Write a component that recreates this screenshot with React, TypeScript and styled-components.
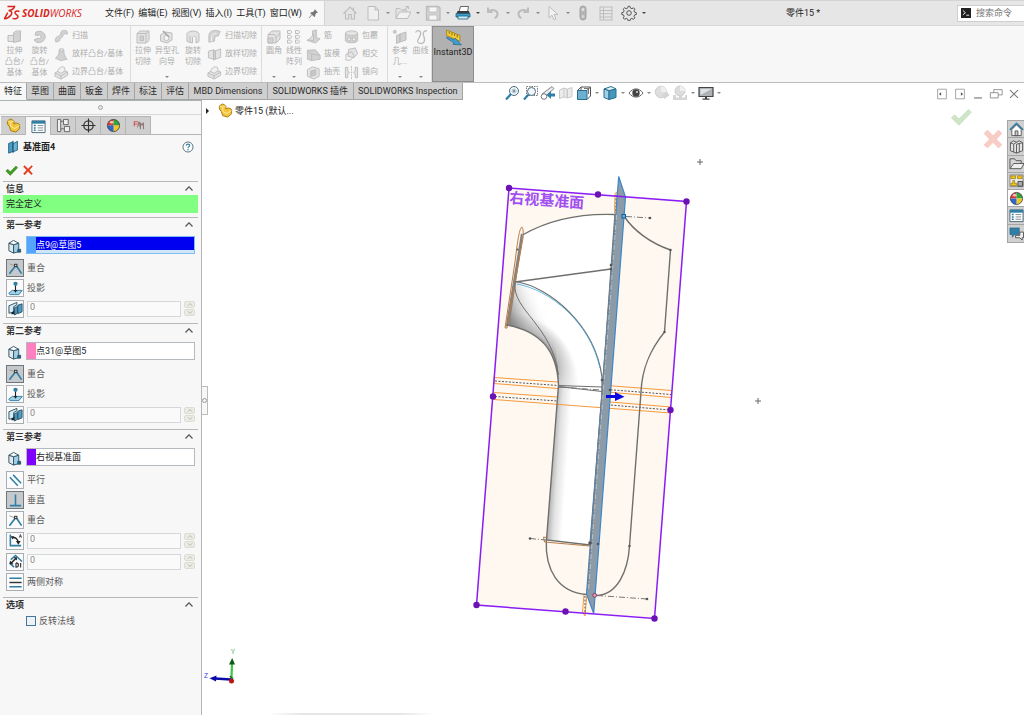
import React from "react";
import styled, { createGlobalStyle } from "styled-components";

const GlobalStyle = createGlobalStyle`
  *, *::before, *::after { box-sizing: border-box; }
  html, body { margin: 0; padding: 0; background: #fff; }
  body, button, input {
    font-family: Roboto, "Noto Sans CJK SC", sans-serif;
    font-size: 9px;
    line-height: 12px;
    color: #222;
  }
  button { padding: 0; margin: 0; border: 0; background: none; cursor: pointer; }
`;

/* ---------- icons ---------- */

const G = "#bdbdbd";
const F = "#e3e3e3";
const D = "#d2d2d2";
const B = "#2f7fa6";
const LB = "#9fd0e6";

const ICONS: Record<string, React.ReactNode> = {
  home: <g fill="none" stroke={G} strokeWidth="1.1"><path d="M1.500 8.500 8 2l6.500 6.500M3.500 7.500V14h3.200V9.500h2.600V14h3.200V7.500M11.500 2.500v2.500" fill={F} /></g>,
  newDoc: <path d="M3 1.500h7l3.500 3.500v10H3zM10 1.500V5h3.500" fill="#efefef" stroke={G} />,
  open: <g stroke={G} fill={F}><path d="M1 13.500V3.500h4l1.500 1.500h5v2" /><path d="M1 13.500 4.500 7H16l-3.500 6.500z" fill="#f1f1f1" /><path d="M8 5.500 13 2M10.500 1.500H13.500V4" fill="none" /></g>,
  save: <g><path d="M1.500 1.500h12l1.500 1.500v12H1.500z" fill={D} stroke={G} strokeWidth="1.400" /><path d="M4 2h8v5H4zM4 10h8v5H4z" fill="#f6f6f6" stroke={G} strokeWidth=".8" /></g>,
  print: <g><path d="M4 7 5.500 1.500h8L12.500 7z" fill="#fff" stroke="#666" /><path d="M2.500 6h11.500l1 3H1.500z" fill="#3a3a3a" /><path d="M1 8.500h14V12H1z" fill="#3e9cc6" stroke="#1f5f80" strokeWidth=".8" /><path d="M3 11h10v3H3z" fill="#c9ebf8" stroke="#1f5f80" strokeWidth=".8" /></g>,
  undo: <g fill="none" stroke={G} strokeWidth="2"><path d="M3 6.500C7 4 12.500 5 12.500 9c0 2-1 3.500-3 4" /><path d="M3 2.500v4.500h4.500" /></g>,
  redo: <g fill="none" stroke={G} strokeWidth="2"><path d="M13 6.500C9 4 3.500 5 3.500 9c0 2 1 3.500 3 4" /><path d="M13 2.500v4.500H8.500" /></g>,
  cursor: <path d="M4 1.500v11.500l3-2.800 2 4.600 2-1-2-4.300h4z" fill="#f2f2f2" stroke={G} />,
  traffic: <g><rect x="5" y="1" width="6" height="14" rx="3" fill="#b4b4b4" stroke="#a2a2a2" /><circle cx="8" cy="4.500" r="1.500" fill="#e2e2e2" /><circle cx="8" cy="11.500" r="1.500" fill="#d4d4d4" /></g>,
  list: <g fill="none" stroke={G}><rect x="2" y="2" width="12" height="13" /><path d="M2 5.500h12M2 8.700h12M2 12h12M5.500 2v13" /></g>,
  gear: <g fill="none" stroke="#555"><circle cx="8" cy="8" r="2.300" /><path d="M8 1.200l1 .2.500 1.700 1.400.6 1.600-.9 1.400 1.400-.9 1.600.6 1.400 1.700.5v1.800l-1.700.4-.6 1.400.9 1.600-1.400 1.400-1.600-.9-1.400.6-.5 1.700H7.100l-.5-1.700-1.400-.6-1.600.9-1.400-1.400.9-1.600-.6-1.400-1.700-.4V7.700l1.700-.5.6-1.400-.9-1.600 1.400-1.400 1.600.9 1.400-.6.5-1.700z" /></g>,
  pin: <g fill="#777"><path d="M9.500 1.500l5 5-1.600.4-2.300 2.600-.3 2.800-1.200.8L3.500 7.500l.8-1.200 2.900-.4 2.300-2.600z" /><path d="M5.800 9.300 1.500 14.500" stroke="#777" strokeWidth="1.200" /></g>,
  extrude: <g stroke={G} fill={F}><path d="M1 6.500h5.500v6H1z" /><path d="M6.500 4 13.500 3v9l-7 1.500z" fill={D} /><path d="M6.500 4 9 2h5l-.5 1" /></g>,
  revolve: <path d="M4 3c8-3 12 5 7 9-3 2.500-7 2-9-1l4-2c2 1.500 4-1 2.500-2.500S5 7.500 3 6z" fill={D} stroke={G} />,
  sweep: <path d="M2 14c-2-5 2-6 4-7s0-5 4-5.500 5 2 4 4l-3-.5c-1-.500-1 .5-1.300 2C9 10 5.500 9.500 6 12.500z" fill={D} stroke={G} />,
  loft: <g stroke={G} fill={D}><path d="M5.500 3.500c.2 4-1 6-4 8.500l5.500 2.500 7-1.500C11 10 10.500 7 10.500 3.500z" /><ellipse cx="8" cy="3.200" rx="2.600" ry="1.400" fill={F} /></g>,
  boundary: <g stroke={G} fill={F}><path d="M1 8.500 8 4.500l6.500 3v3.500L7.500 15 1 12z" /><path d="M1 8.500l6.500 3 7-4M7.500 11.500V15" fill="none" /><path d="M4 7C4 3 9 1 11 2.500L12 6 7.500 9z" fill="#f0f0f0" /></g>,
  cutBox: <g stroke={G} fill={F}><path d="M2 4.500 5 2h9v9.500L11 14H2z" /><path d="M2 4.500h9V14M11 4.500 14 2" fill="none" /><path d="M5 7h3.500v4.500H5z" fill={D} /></g>,
  hole: <g stroke={G} fill={F}><path d="M1.500 6 6 3l7 1v7l-5 3-6.500-2z" /><circle cx="7.500" cy="9" r="2.600" fill="#f7f7f7" /><path d="M4 2l6 6" strokeWidth="1.600" stroke="#a9a9a9" /></g>,
  revCut: <path d="M2 4.500C4 1.500 11 1 14 4.500v8l-3 1.500V8.500c-1-1.500-2.500-1.500-3.500 0V14L2 12.500zM5 7v6" fill={F} stroke={G} />,
  sweepCut: <g stroke={G} fill={D}><path d="M2 14V7c0-3.500 3-5.500 7-5.500l5 1-2 5C9 7.500 8 8.500 8 13z" /><path d="M5 13.500V8c.5-2 2-3.500 5-3.500" fill="none" stroke="#f4f4f4" /></g>,
  loftCut: <g stroke={G} fill={F}><path d="M1.500 4.500 7 3v10l-5.500-1.500zM9 4l5.500-2v9L9 13z" /><path d="M7 3l2 1v9l-2 1z" fill={D} /></g>,
  fillet: <g stroke={G} fill={F}><path d="M2 5.500 6 2h8v8l-4 4H2z" /><path d="M2 5.500h5c2 0 3 1 3 3V14M10 8.500 14 4" fill="none" /><path d="M2 9h5v5H2z" fill={D} /></g>,
  pattern: <g stroke={G} fill="#f4f4f4">{[1, 5.800, 10.600].map((y) => <g key={y}><path d={`M1.500 ${y + .5}h3l1.500 1.500-1.500 1.500h-3zM9.500 ${y + .5}h3l1.500 1.500-1.500 1.500h-3z`} /></g>)}</g>,
  rib: <g stroke={G} fill={D}><path d="M7 2l4-1v8l4 1.500-5 4.500-9-3 6-2z" /><path d="M3 11.500 8 6v6.500z" fill={F} /></g>,
  draft: <g stroke={G} fill={D}><path d="M1.500 3.500 10 3l5 6v4L6 14.500 1.500 13z" /><path d="M1.500 3.500 6 7.500V14.500M6 7.500l9 1.500" fill="none" /></g>,
  shell: <g stroke={G} fill={F}><path d="M1.500 5 7 2l7 2v8l-5.500 3L1.500 12z" /><path d="M5 6.500 10.500 5v5.500L5 12z" fill="#c6c6c6" /></g>,
  wrap: <g stroke={G} fill={D}><path d="M1.500 4.500v8c1 3 12 3 13 0v-8" /><ellipse cx="8" cy="4.500" rx="6.500" ry="2.500" fill={F} /><path d="M4 9.500h3v3H4zM9 9.500h3v3H9z" fill="#f4f4f4" /></g>,
  intersect: <g stroke={G} fill="none"><path d="M5 2.500 12 1l2.500 6-4 4.500L4 10z" fill={F} /><path d="M2 8l6-3 3 4.500L7 14H2z" /></g>,
  mirror: <g stroke={G} fill={F}><path d="M1.500 2.500H4v4l2 1.500-2 1.500v4H1.500zM14.500 2.500H12v4L10 8l2 1.500v4h2.500z" /><path d="M8 1v14" strokeDasharray="2 1" /></g>,
  refGeo: <g stroke={G} fill={D}><circle cx="2.800" cy="2.800" r="1.500" /><path d="M4.500 6.500 8 5v8l-3.500 1.500zM8 5l6-2v8L8 13z" /></g>,
  curve: <path d="M2.500 3.500c2-3 6-2 5 2s-5 7-1.500 8.500S13 13 11 8s0-6 3-6.500" fill="none" stroke={G} strokeWidth="1.300" />,
  instant: <g><path d="M1.500 1 14 6v5.500L1.500 6z" fill="#f5cf3a" stroke="#a78312" strokeWidth=".8" /><path d="M4 2.500v2M6.500 3.500v2.500M9 4.500v2M11.500 5.500v2.500" stroke="#6b540c" strokeWidth=".8" /><path d="M1.500 7.500l7 2.500 1-1.500L15.500 15l-8-.5 1-1.500-6.500-4z" fill="#3f9ccb" stroke="#1f668c" strokeWidth=".6" /></g>,
  zoomFit: <g fill="none"><circle cx="10" cy="6" r="4.500" fill="#eef8fd" stroke="#4f6a7a" /><path d="M7 9 2 14.500" stroke={B} strokeWidth="2.200" /><path d="M7.500 6h5M10 3.500v5M8.500 4.500l3 3M11.500 4.500l-3 3" stroke="#7b8d98" strokeWidth=".8" /></g>,
  zoomArea: <g fill="none"><path d="M4.500 1.500h11v9h-11z" stroke="#777" strokeDasharray="1.500 1" /><circle cx="9.500" cy="6.500" r="4" fill="#eef8fd" stroke="#4f6a7a" /><path d="M6.500 9.500 2 14.500" stroke={B} strokeWidth="2.200" /></g>,
  prevView: <g><path d="M2 9 12 1.500l2 2L5 12z" fill="#e9e9e9" stroke="#888" /><circle cx="4" cy="11.500" r="2.800" fill="#fff" stroke="#777" /><path d="M11 6v2.500h4v3h-4V14L6.500 10z" fill={B} /></g>,
  section: <g stroke="#c9c9c9" fill="#ececec"><path d="M1.500 5 6 3v9l-4.500 1.500zM6 3l3 1v9l-3-1M9.500 4 14 2.500v9L9.500 13z" /></g>,
  orient: <g><path d="M1.500 5.500h9.500v9H1.500z" fill="#6bb0d0" stroke="#276d90" /><path d="M1.500 5.500 5 2h9.500v9L11 14.500M11 5.500 14.500 2M5 2v3.500" fill="none" stroke="#555" /><path d="M8 3.500h4.500v5.500" stroke="#555" fill="none" strokeWidth=".8" /></g>,
  display: <g stroke="#276d90"><path d="M2 4l5 1.500v9L2 12.500z" fill={LB} /><path d="M7 5.500 14 4v8.500l-7 2z" fill="#4796bc" /><path d="M2 4l7-2.500L14 4 7 5.500z" fill="#e6f4fa" /></g>,
  eye: <g><path d="M1 8c4-5.500 10-5.500 14 0-4 5.500-10 5.500-14 0z" fill="#fff" stroke="#666" /><circle cx="8" cy="8" r="3.700" fill="#444" /><circle cx="9" cy="7" r="1" fill="#ddd" /></g>,
  ballPale: <g><circle cx="7" cy="7" r="5.800" fill="#dedede" stroke="#cfcfcf" /><path d="M7 7V1.200A5.800 5.800 0 0 1 12.800 7z" fill="#efefef" /><path d="M8 10l5-3 2.500 3-5 4z" fill="#d4d4d4" /></g>,
  scenePale: <g><path d="M1 10h3v2.500h3V10h3v2.500h3V10h2v5H1z" fill="#d6d6d6" /><circle cx="8" cy="6" r="5" fill="#dcdcdc" stroke="#cfcfcf" /><path d="M8 6V1a5 5 0 0 1 5 5z" fill="#efefef" /></g>,
  monitor: <g><path d="M1 2.500h14v9H1z" fill="#aeb2b5" stroke="#444" strokeWidth="1.200" /><path d="M2.500 4h11L2.500 10z" fill="#dfe2e4" /><path d="M7 11.500h2v2h2.500v1.200h-7v-1.200H7z" fill="#444" /></g>,
  paneL: <g fill="none" stroke="#9a9a9a"><path d="M3 2.500h10v11H3z" /><path d="M7 6 4.500 8 7 10z" fill="#555" stroke="none" /></g>,
  paneR: <g fill="none" stroke="#9a9a9a"><path d="M3 2.500h10v11H3z" /><path d="M9 6l2.500 2L9 10z" fill="#555" stroke="none" /></g>,
  min: <path d="M3.500 12.500h9" stroke="#888" strokeWidth="1.500" />,
  restore: <g fill="#fff" stroke="#888"><path d="M5.500 3h9.500v6h-9.500z" /><path d="M1.500 6.500h9v6h-9z" /></g>,
  close: <path d="M3.500 3.500l9 9M12.500 3.500l-9 9" stroke="#777" strokeWidth="1.200" />,
  part: <g stroke="#a47a10" fill="#f2c53c"><path d="M1.500 6.500V3L5 1l3.500 2v3.500c1-1.500 4.500-1.500 6 .5v4.500L10.500 15 5 13.500 3.500 9z" /><path d="M1.500 3 5 4.500v4.500l4.500 2.500M5 4.500l3.500-1.500M9.500 11 14.500 8" fill="none" stroke="#fff2b0" strokeWidth=".9" /></g>,
  property: <g><path d="M1 2h14v12.500H1z" fill="#fff" stroke="#4a6575" /><path d="M1 2h14v3H1z" fill={B} /><path d="M3 7h2M3 9.500h2M3 12h2" stroke={B} strokeWidth="1.600" /><path d="M7 7h6M7 9.500h6M7 12h6" stroke="#7f8b92" /></g>,
  config: <g fill="#efefef" stroke="#666"><path d="M1.500 1.500h3.500v13H1.500zM5 3.500h3M5 11.500h4" /><path d="M8 1.500h5v5.500H8zM9 9h5.500v5.500H9z" /></g>,
  target: <g fill="none" stroke="#333"><circle cx="8" cy="8" r="5" strokeWidth="1.300" /><path d="M8 .5v15M.5 8h15" strokeWidth="1.200" /></g>,
  ball: <g><path d="M8 8V1.500a6.500 6.500 0 0 0-6.500 6.500z" fill="#e13a2c" /><path d="M8 8V1.500a6.500 6.500 0 0 1 6.500 6.500z" fill="#2fa53c" /><path d="M8 8h6.500A6.500 6.500 0 0 1 8 14.500z" fill="#f4c62c" /><path d="M8 8v6.500A6.500 6.500 0 0 1 1.500 8z" fill="#2f69c8" /><circle cx="8" cy="8" r="6.500" fill="none" stroke="#333" strokeWidth=".8" /><ellipse cx="6" cy="4.500" rx="2" ry="1.300" fill="#fff" opacity=".7" /></g>,
  cam: <g fill="none" stroke="#d05050"><path d="M3 4h4.500M3 6.500h4M3.500 4v5" /><path d="M7 10l1.500-6L10 10M10 12V5l2 3 1-3 .5 7" stroke="#8b6a6a" /></g>,
  plane: <g stroke="#1f5f80"><path d="M3 4 8 2v11l-5 2z" fill="#4c9cc4" /><path d="M8 4.500 13 1.500v10L8 13.500z" fill="#6fb4d4" /><path d="M8 1v14" /></g>,
  help: <g><circle cx="8" cy="8" r="6.700" fill="#fff" stroke="#4c6575" strokeWidth="1.200" /><path d="M5.800 6.200c.2-3 4.600-2.600 4.400 0C10 7.500 8 7.600 8 9.600" fill="none" stroke={B} strokeWidth="1.600" /><circle cx="8" cy="11.800" r="1" fill={B} /></g>,
  check: <path d="M1 8.500 3.500 6.500 6.500 9.500 13.500 2.500 15.500 4.500 6.500 14z" fill="#3f9d22" stroke="#2c7814" strokeWidth=".6" />,
  cancel: <path d="M2 3.500 3.500 2 8 6.500 13 2l1 1.200L9.800 8l4.200 5-1.500 1.200L8 9.800 3.500 14.500 2 13l4.300-5z" fill="#e23b1c" stroke="#e23b1c" strokeWidth=".5" />,
  cross: <path d="M2 4 4 2l4 4.200L12 2l2 2-4 4.200 4 4L12 14 8 10l-4 4-2-1.800 4-4z" fill="#e23b1c" stroke="#e23b1c" strokeWidth="1.200" strokeLinejoin="round" />,
  face: <g stroke="#2d5165"><path d="M2 4.500 7 6v9l-5-2.500z" fill="#e4e8ea" /><path d="M7 6l5.500-1.500v9L7 15z" fill={LB} /><path d="M2 4.500 7 1.500l5.500 3L7 6z" fill="#fff" /><path d="M11.500 11h3v3h-3z" fill="#1f6b92" /></g>,
  coincident: <g fill="none"><path d="M1.500 13.500 8.500 4.500l6 9" stroke={B} strokeWidth="1.800" /><path d="M1.500 3 7 5" stroke="#999" /><rect x="7" y="3.500" width="2.500" height="2.500" fill="#ddd" stroke="#333" /></g>,
  project: <g><path d="M.8 13 4.500 10h10.700l-3.500 4.500H2z" fill={LB} stroke={B} /><path d="M8 4v7" stroke="#222" strokeWidth="1.200" /><path d="M6 9.500h4L8 12.500z" fill="#222" /><circle cx="8" cy="3" r="2.300" fill={B} /></g>,
  parallelPlane: <g stroke="#2d5165"><path d="M1 5 9.500 1.500V4L6 6v6l-5 1z" fill="#d6eaf3" /><path d="M4 12l4-2.500v4.500H3.500z" fill="#222" stroke="none" /><path d="M7 7l3-1v7l-3 2zM10.500 4.500 15 3v8.500l-4.500 2z" fill="#4c9cc4" /></g>,
  parallel: <path d="M2 4.500l8.500 9M5.500 2 14 11" stroke={B} strokeWidth="1.600" fill="none" />,
  perpendicular: <path d="M8 1.500v11.500M2 13.500h12" stroke={B} strokeWidth="1.700" fill="none" />,
  angle: <g fill="none"><path d="M2.500 1.500v12H14" stroke={B} strokeWidth="1.700" /><path d="M4 5c4-1 6.500 1.500 7 5.500" stroke="#222" strokeWidth="1.500" /><path d="M8.500 8.500h5l-2.500 4zM3 3.500 6.500 3.500 5 7z" fill="#222" /><path d="M12 5l1.200-3.500L14.500 5M12.500 3.800h1.500" stroke="#333" strokeWidth=".8" /></g>,
  distance: <g fill="none"><path d="M3 6 8 1.500 15 8M1.500 9.500 6.500 14" stroke={B} strokeWidth="1.600" /><path d="M3.500 9.500 8.500 4.500" stroke="#222" strokeWidth="1.600" /><path d="M2 7v4h4zM6 3.500h3.500v3.500z" fill="#222" /><path d="M8.500 9.500v4.500c3.500 0 3.500-4.500 0-4.500M13.500 9.500v5" stroke="#333" strokeWidth="1.200" /></g>,
  symmetric: <g><path d="M1.500 3.500h13M1.500 12.500h13" stroke={B} strokeWidth="1.500" /><path d="M1.500 8h13" stroke="#333" strokeWidth="1.500" /></g>,
  tHome: <g><path d="M1 8.500 8 1.500l7 7" fill="none" stroke={B} strokeWidth="1.800" /><path d="M3 8v6.500h10V8L8 3z" fill="#fff" stroke="#555" /><path d="M6.500 14.500V9.500h3v5z" fill="#ccc" stroke="#555" /></g>,
  tLib: <g fill="#e4e4e4" stroke="#555"><path d="M1.500 4 5 2l3 1.500L11 2l3.500 2v8.500L8 15l-6.500-2.500zM1.500 4 5 5.500V14M8 5.500V15M5 5.500 8 3.500M8 5.500l6.500-1.500M11 4.700V14" /></g>,
  tFolder: <g fill="#d6d6d6" stroke="#555"><path d="M1 13.500V3h5l1.500 2H13v3" /><path d="M1 13.500 5 8h11l-3 5.500z" fill="#eee" /></g>,
  tPalette: <g><path d="M1 2h14v12.500H1z" fill="#eee" stroke="#888" /><path d="M2 3h5v3H2zM9 3h5v3H9zM2 13.500V11h2V8h2v3h2v2.500z" fill="#f0c419" stroke="#7d6200" strokeWidth=".6" /><path d="M9.500 9h5v5h-5z" fill="#aaa" stroke="#444" /></g>,
  tForum: <g><path d="M1 2h10v7H6l-2.500 3V9H1z" fill={B} stroke="#1f5f80" strokeWidth=".6" /><path d="M7 10h4.500V6.500H15.500v6H14V15l-2.500-2.500H7z" fill="#eee" stroke="#555" /></g>,
  command: <g><rect x="0" y="0" width="16" height="16" fill="#222" /><path d="M3 4l4 3.500L3 11M8.500 11.500h4.500" stroke="#fff" strokeWidth="1.400" fill="none" /></g>,
};

const IconSvg = styled.svg<{ $s: number }>`
  width: ${(p) => p.$s}px;
  height: ${(p) => p.$s}px;
  flex: none;
  display: block;
`;
const Icon = ({ name, size = 15 }: { name: string; size?: number }) => (
  <IconSvg $s={size} viewBox="0 0 16 16" aria-hidden="true">{ICONS[name]}</IconSvg>
);

const Caret = styled.span<{ $pale?: boolean }>`
  width: 0;
  height: 0;
  border: 2px solid transparent;
  border-bottom: 0;
  border-top-color: ${(p) => (p.$pale ? "#888" : "#444")};
`;

/* ---------- page frame ---------- */

const Page = styled.div`
  min-height: 100vh;
  display: flex;
  flex-direction: column;
  background: #fff;
  overflow: hidden;
`;

const TitleBar = styled.header`
  display: flex;
  height: 26px;
  background: #e6e6e6;
  border-top: 1px solid #d4d4d4;
  border-bottom: 1px solid #d8d8d8;
`;
const MenuArea = styled.div`
  width: 325px;
  flex: none;
  display: flex;
  align-items: center;
  padding: 0 5px 0 4px;
  background: #f7f7f7;
  border-right: 1px solid #d4d4d4;
`;
const Brand = styled.div`
  width: 101px;
  flex: none;
  display: flex;
  align-items: center;
  gap: 2px;
  color: #d9261c;
  font-family: "Open Sans", sans-serif;
  font-size: 10px;
  font-style: italic;
`;
const BrandMark = styled.svg`
  width: 16px;
  height: 16px;
`;
const MenuNav = styled.nav`
  display: flex;
  gap: 4px;
  flex: 1;
`;
const MenuButton = styled.button`
  white-space: nowrap;
`;
const QuickBar = styled.div`
  display: flex;
  align-items: center;
  padding-left: 15px;
`;
const QuickItem = styled.button<{ $solo?: boolean }>`
  width: 20px;
  height: 20px;
  display: flex;
  align-items: center;
  justify-content: center;
  margin-right: ${(p) => (p.$solo ? 3 : 0)}px;
`;
const DropButton = styled.button<{ $w: number }>`
  width: ${(p) => p.$w}px;
  height: 14px;
  display: flex;
  align-items: center;
  justify-content: center;
`;
const DocTitle = styled.div`
  flex: 1;
  text-align: center;
  align-self: center;
`;
const SearchBox = styled.label`
  width: 67px;
  height: 17px;
  align-self: center;
  display: flex;
  align-items: center;
  gap: 5px;
  padding-left: 3px;
  background: #fff;
  border: 1px solid #cfcfcf;
  border-right: 0;
`;
const SearchInput = styled.input`
  width: 100%;
  min-width: 0;
  border: 0;
  padding: 0;
  outline: 0;
  background: none;
  &::placeholder { color: #777; opacity: 1; }
`;

/* ---------- ribbon ---------- */

const Ribbon = styled.div`
  display: flex;
  height: 57px;
  background: #f7f7f7;
  border-bottom: 1px solid #bcbcbc;
`;
const Group = styled.div<{ $w: number }>`
  width: ${(p) => p.$w}px;
  flex: none;
  display: flex;
  padding-left: 2px;
  border-right: 1px solid #dcdcdc;
`;
const BigTool = styled.button<{ $w: number }>`
  width: ${(p) => p.$w}px;
  flex: none;
  display: flex;
  flex-direction: column;
  align-items: center;
  padding: 3px 0 4px;
  font-size: 8px;
  line-height: 11px;
  color: #aeaeae;
  ${Caret} { margin-top: auto; }
`;
const BigLabel = styled.span`
  display: flex;
  flex-direction: column;
  white-space: nowrap;
`;
const ToolColumn = styled.div`
  display: flex;
  flex-direction: column;
  justify-content: space-evenly;
  padding: 0 2px;
`;
const SmallTool = styled.button`
  display: flex;
  align-items: center;
  gap: 3px;
  height: 16px;
  font-size: 8px;
  color: #aeaeae;
  white-space: nowrap;
`;
const InstantTool = styled.button`
  width: 42px;
  display: flex;
  flex-direction: column;
  align-items: center;
  padding-top: 2px;
  background: #b1b1b1;
  border: 1px solid #8d8d8d;
`;

/* ---------- command tabs and view toolbar ---------- */

const TabRow = styled.div`
  display: flex;
  height: 17px;
`;
const CommandTab = styled.button<{ $on?: boolean }>`
  height: 17px;
  padding: 0 4px;
  white-space: nowrap;
  color: #2a2a2a;
  background: ${(p) => (p.$on ? "#f7f7f7" : "#cfcfcf")};
  border-right: 1px solid #a4a4a4;
  border-bottom: 1px solid ${(p) => (p.$on ? "#f7f7f7" : "#a4a4a4")};
`;
const WideTab = styled(CommandTab)`
  flex: 1 0 auto;
`;
const TabList = styled.div`
  display: flex;
  width: 463px;
  flex: none;
`;
const HeadsUp = styled.div`
  display: flex;
  align-items: center;
  padding: 3px 0 0 40px;
`;
const ViewButton = styled.button`
  width: 18px;
  height: 16px;
  display: flex;
  align-items: center;
  justify-content: center;
`;
const WindowButtons = styled.div`
  display: flex;
  align-items: center;
  margin-left: auto;
  padding: 4px 1px 0 0;
`;

/* ---------- property manager ---------- */

const Body = styled.div`
  flex: 1;
  display: flex;
`;
const Panel = styled.aside`
  width: 202px;
  flex: none;
  background: #f7f7f7;
  border-top: 1px solid #a9b3b3;
  border-right: 1px solid #b4b4b4;
`;
const Grip = styled.div`
  height: 14px;
  display: flex;
  align-items: center;
  justify-content: center;
  border-bottom: 1px solid #d8d8d8;
  &::after {
    content: "";
    width: 5px;
    height: 5px;
    border: 1px solid #a5a5a5;
    border-radius: 50%;
    background: #e6e6e6;
  }
`;
const PanelTabs = styled.div`
  display: flex;
  margin-top: 1px;
  padding-left: 1px;
  height: 19px;
  border-bottom: 1px solid #b5b5b5;
`;
const PanelTab = styled.button<{ $on?: boolean }>`
  width: 25px;
  height: ${(p) => (p.$on ? 19 : 18)}px;
  display: flex;
  align-items: center;
  justify-content: center;
  background: ${(p) => (p.$on ? "#f7f7f7" : "#cfcfcf")};
  border: 1px solid #b5b5b5;
  border-left-width: 0;
  border-bottom: 0;
`;
const FeatureHead = styled.div`
  display: flex;
  align-items: center;
  gap: 3px;
  height: 24px;
  padding: 0 7px 0 6px;
  font-weight: 700;
`;
const FeatureName = styled.span`
  flex: 1;
`;
const ConfirmRow = styled.div`
  display: flex;
  align-items: center;
  gap: 4px;
  height: 22px;
  padding-left: 5px;
`;
const Section = styled.section<{ $end: number }>`
  margin: 0 3px;
  border-top: 1px solid #b8b8b8;
  padding-bottom: ${(p) => p.$end}px;
`;
const SectionHead = styled.button`
  width: 100%;
  height: 13px;
  display: flex;
  align-items: center;
  justify-content: space-between;
  padding: 0 5px 0 3px;
  font-weight: 700;
  color: #333;
`;
const Message = styled.div`
  height: 18px;
  padding: 3px;
  background: #80ff80;
`;
const PickRow = styled.div`
  display: flex;
  align-items: center;
  gap: 3px;
  margin: 5px 3px 4px;
`;
const PickIcon = styled.span`
  width: 17px;
  display: flex;
  justify-content: center;
  padding-top: 3px;
`;
const PickField = styled.label<{ $active?: boolean }>`
  flex: 1;
  display: flex;
  height: 18px;
  background: ${(p) => (p.$active ? "#cfe6fa" : "#fff")};
  border: 1px solid ${(p) => (p.$active ? "#7fbdf0" : "#b3b9bc")};
`;
const Swatch = styled.span<{ $c: string }>`
  width: 9px;
  background: ${(p) => p.$c};
`;
const PickInput = styled.input<{ $active?: boolean }>`
  flex: 1;
  min-width: 0;
  height: 13px;
  border: 0;
  padding: 1px 0 0;
  outline: 0;
  color: ${(p) => (p.$active ? "#fff" : "#222")};
  background: ${(p) => (p.$active ? "#0000f0" : "#fff")};
`;
const RelationRow = styled.div`
  height: 20px;
  display: flex;
  align-items: center;
  gap: 3px;
  padding-left: 3px;
  color: #5a5a5a;
`;
const NumberRow = styled(RelationRow)`
  height: 21px;
  padding-right: 3px;
`;
const RelationButton = styled.button<{ $on?: boolean }>`
  width: 18px;
  height: 18px;
  flex: none;
  display: flex;
  align-items: center;
  justify-content: center;
  background: ${(p) => (p.$on ? "#c6c9cc" : "#fbfbfb")};
  border: 1px solid ${(p) => (p.$on ? "#6f767b" : "#a8aeb2")};
`;
const NumberInput = styled.input`
  flex: 1;
  min-width: 0;
  height: 16px;
  padding: 0 2px 3px;
  color: #8a8a8a;
  background: #fafafa;
  border: 1px solid #d4d8da;
`;
const Spinner = styled.span`
  width: 11px;
  display: flex;
  flex-direction: column;
  gap: 1px;
`;
const SpinButton = styled.button`
  height: 7px;
  display: flex;
  align-items: center;
  justify-content: center;
  background: #ecece6;
  border: 1px solid #dedcd2;
  border-radius: 2px;
`;
const OptionRow = styled.label`
  display: flex;
  align-items: center;
  gap: 3px;
  padding: 4px 0 0 23px;
  color: #5a5a5a;
`;
const CheckBox = styled.input`
  appearance: none;
  width: 10px;
  height: 10px;
  margin: 0;
  background: #eef2f5;
  border: 1px solid #3f77a0;
`;

/* ---------- graphics area ---------- */

const Viewport = styled.main`
  position: relative;
  flex: 1;
  min-height: 580px;
  overflow: hidden;
`;
const Scene = styled.svg`
  position: absolute;
  inset: 0;
  width: 100%;
  height: 100%;
`;
const TreeRoot = styled.div`
  position: absolute;
  left: 4px;
  top: 3px;
  display: flex;
  align-items: center;
  gap: 2px;
`;
const TreeArrow = styled.span`
  border: 3px solid transparent;
  border-left-color: #222;
  border-right: 0;
  margin-right: 7px;
`;
const PullTab = styled.button`
  position: absolute;
  left: 0;
  top: 286px;
  width: 6px;
  height: 29px;
  background: #f7f7f7;
  border: 1px solid #bcbcbc;
  border-left: 0;
  display: flex;
  align-items: center;
  &::after {
    content: "";
    width: 5px;
    height: 5px;
    border: 1px solid #9a9a9a;
    border-radius: 50%;
  }
`;
const CornerButton = styled.button<{ $r: number; $t: number }>`
  position: absolute;
  right: ${(p) => p.$r}px;
  top: ${(p) => p.$t}px;
  opacity: 0.25;
`;
const TaskPane = styled.div`
  position: absolute;
  right: 0;
  top: 20px;
  width: 17px;
  height: 123px;
  display: grid;
  grid-auto-rows: 1fr;
  border: 1px solid #a5a5a5;
  border-right: 0;
`;
const TaskButton = styled.button<{ $on?: boolean }>`
  display: flex;
  align-items: center;
  justify-content: center;
  background: ${(p) => (p.$on ? "#fff" : "#d0d0d0")};
  border-bottom: 1px solid #a5a5a5;
  &:last-child { border-bottom: 0; }
`;

const ChevronUp = ({ down, pale, small }: { down?: boolean; pale?: boolean; small?: boolean }) => (
  <svg width={small ? 6 : 8} height={small ? 3 : 5} viewBox="0 0 8 5" aria-hidden="true">
    <path d={down ? "M.5.5 4 4.200 7.500.5" : "M.5 4.500 4 .8l3.500 3.700"} fill="none" stroke={pale ? "#a5a5a0" : "#555"} strokeWidth="1.200" />
  </svg>
);

const Relation = ({ icon, label, on }: { icon: string; label: string; on?: boolean }) => (
  <RelationRow>
    <RelationButton $on={on} aria-label={label} aria-pressed={!!on}><Icon name={icon} /></RelationButton>
    {label}
  </RelationRow>
);

const NumberField = ({ icon, label }: { icon: string; label: string }) => (
  <NumberRow>
    <RelationButton aria-label={label}><Icon name={icon} /></RelationButton>
    <NumberInput aria-label={label} defaultValue="0" disabled />
    <Spinner>
      <SpinButton aria-label="+"><ChevronUp pale small /></SpinButton>
      <SpinButton aria-label="-"><ChevronUp pale small down /></SpinButton>
    </Spinner>
  </NumberRow>
);

const Pick = ({ label, value, color, active }: { label: string; value: string; color: string; active?: boolean }) => (
  <PickRow>
    <PickIcon><Icon name="face" /></PickIcon>
    <PickField $active={active}>
      <Swatch $c={color} />
      <PickInput $active={active} aria-label={label} value={value} readOnly />
    </PickField>
  </PickRow>
);

const Heading = ({ children }: { children: string }) => (
  <SectionHead>{children}<ChevronUp /></SectionHead>
);

const Big = ({ icon, lines, w, drop }: { icon: string; lines: string[]; w: number; drop?: boolean }) => (
  <BigTool $w={w}>
    <Icon name={icon} size={16} />
    <BigLabel>{lines.map((l) => <span key={l}>{l}</span>)}</BigLabel>
    {drop && <Caret $pale />}
  </BigTool>
);

const Column = ({ items }: { items: [string, string][] }) => (
  <ToolColumn>
    {items.map(([icon, label]) => (
      <SmallTool key={label}><Icon name={icon} />{label}</SmallTool>
    ))}
  </ToolColumn>
);

const quick: [string, boolean][] = [
  ["home", false], ["newDoc", true], ["open", true], ["save", true], ["print", true],
  ["undo", true], ["redo", true], ["cursor", true], ["traffic", false], ["list", false], ["gear", true],
];
const views: [string, boolean][] = [
  ["zoomFit", false], ["zoomArea", false], ["prevView", false], ["section", false], ["orient", true],
  ["display", true], ["eye", true], ["ballPale", false], ["scenePale", true], ["monitor", true],
];

const Model = () => (
  <Scene viewBox="202 100 822 615" preserveAspectRatio="xMinYMin meet" role="img" aria-label="右视基准面">
    <defs>
      <radialGradient id="bend" gradientUnits="userSpaceOnUse" cx="505" cy="385" r="105">
        <stop offset=".5" stopColor="#777" />
        <stop offset=".58" stopColor="#b8b8b8" />
        <stop offset=".7" stopColor="#fff" />
      </radialGradient>
      <linearGradient id="mouth" gradientUnits="userSpaceOnUse" x1="508" y1="318" x2="543" y2="304">
        <stop offset="0" stopColor="#808080" stopOpacity=".95" />
        <stop offset="1" stopColor="#fff" stopOpacity="0" />
      </linearGradient>
      <linearGradient id="fade" gradientUnits="userSpaceOnUse" x1="0" y1="340" x2="0" y2="382">
        <stop offset="0" stopColor="#fff" stopOpacity="0" />
        <stop offset="1" stopColor="#fff" stopOpacity=".6" />
      </linearGradient>
      <linearGradient id="stem" gradientUnits="userSpaceOnUse" x1="552" y1="462" x2="567" y2="463">
        <stop offset="0" stopColor="#b4b4b4" />
        <stop offset=".4" stopColor="#e2e2e2" />
        <stop offset="1" stopColor="#fff" />
      </linearGradient>
      <linearGradient id="shade" x1="0" x2="1" y1="0" y2="0">
        <stop offset="0" stopColor="#e6e6e6" stopOpacity="0" />
        <stop offset=".2" stopColor="#e6e6e6" />
        <stop offset=".8" stopColor="#e6e6e6" />
        <stop offset="1" stopColor="#e6e6e6" stopOpacity="0" />
      </linearGradient>
    </defs>

    <path d="M509 188 686.500 201.500 654.500 618.500 476.500 605z" fill="#fef8f1" />
    <path d="M522.500 235C545 222 575 213 615.500 214.500L602 390 515 282z" fill="#fff" />
    <path d="M558.500 385H602L590 545 546.500 540z" fill="url(#stem)" />
    <path d="M515.500 281.500C550 287 595 325 602 377V388H558.500C558 350 540 331 507 325z" fill="url(#bend)" />
    <path d="M515.500 281.500C550 287 560 296 570 305L557 365C552 345 540 331 507 325z" fill="url(#mouth)" />
    <path d="M550 335 602 335V387H558.500C558.500 360 556 348 550 335z" fill="url(#fade)" />

    <g fill="none" stroke="#f59a3c" strokeWidth="1">
      <path d="M494 377.500 558 382M494 377.500V383.500L558 388.500M494 392.500 557 397M494 399.500 671 413M607 385.500 671.500 390.500V397.500L607 392M604 401.500 671 407" />
      <path d="M614.500 213 615 193.500 617 192V213M584 594 582.500 612 585 616 587 594" />
    </g>
    <g fill="none" stroke="#555" strokeWidth="1" strokeDasharray="2 1.500">
      <path d="M495 381 558 385.500M495 396.500 557 401M607 389.500 671 394.500M604 404.500 670 410M616 195V212M585 596V612" />
    </g>

    <path d="M521 233 523 236 509.500 325 505.500 327z" fill="#868280" />
    <path d="M522 227C519 228 517 246 515 262L505 328 507 328 523 238C523.500 232 523 228 522 227z" fill="none" stroke="#b87c48" />

    <g fill="none" stroke="#6f6f6c" strokeWidth="1.400">
      <path d="M522.500 235C545 222 575 213 615 214.500L602.500 388 590 545" />
      <path d="M515 282 611 269" />
      <path d="M515.500 281.500C550 287 595 325 602 377V390" strokeWidth="1.200" />
      <path d="M507 325C540 331 557 350 558.500 385L546.500 540 590 545" />
      <path d="M515 283C512 310 552 325 558.500 375" strokeWidth="1" />
      <path d="M558 385.500 602 387M558 386.500 602 391.500" strokeWidth="1.200" />
      <path d="M624 216C633 230 650 243 670.500 250L664.500 332C650 350 642 368 641 392L629.500 546C628 570 618 595 596 595.500" />
      <path d="M546.300 540C545 570 558 592 586.500 594.500" />
    </g>
    <path d="M517 284C550 290 590 322 600 368" fill="none" stroke="#42a8df" strokeWidth=".8" />
    <path d="M546 537.500 543.500 537 544.500 542 590 546" fill="none" stroke="#b87c48" />
    <g fill="none" stroke="#777" strokeDasharray="6 2 1 2">
      <path d="M626 216.500 650 218M530 538.500 546 540M597 595.500 647 599M560 387 600 390" />
    </g>

    <path d="M618.700 176.500 625.500 197 593.700 613.500 586.500 594z" fill="#8c9ba8" stroke="#3f86c8" strokeWidth="1.200" />
    <path d="M615.500 215 587.500 590" stroke="#77808a" strokeWidth="1.200" />
    <path d="M616.500 215 588.500 590" stroke="#c8ced3" strokeWidth=".8" strokeDasharray="5 2 1 2" />
    <g fill="#555">
      <circle cx="650" cy="218" r="1.300" /><circle cx="530" cy="538.500" r="1.300" /><circle cx="647" cy="599" r="1.300" />
      <circle cx="670.500" cy="250" r="1.200" /><circle cx="664.500" cy="332" r="1.200" /><circle cx="629.500" cy="546" r="1.200" />
      <circle cx="611" cy="265" r="1.300" /><circle cx="611" cy="269" r="1.300" /><circle cx="517.500" cy="249.500" r="1" />
      <circle cx="602" cy="380" r="1.300" /><circle cx="610" cy="390" r="1.300" /><circle cx="590" cy="543" r="1.800" /><circle cx="598" cy="544" r="1.300" />
    </g>

    <path d="M509 188 686.500 201.500 654.500 618.500 476.500 605z" fill="none" stroke="#8a1cf5" strokeWidth="1.500" />
    {[[509, 188], [598, 194.500], [686.500, 201.500], [493, 396.500], [670.500, 410], [476.500, 605], [565.500, 611.500], [654.500, 618.500]].map(([x, y]) => (
      <circle key={`${x}-${y}`} cx={x} cy={y} r="3.200" fill="#6a12b5" />
    ))}
    <path d="M606 395h9v-3l9.500 4.800-9.500 4.200v-3h-9z" fill="#0909e0" />
    <rect x="622" y="214.500" width="3.500" height="3.500" fill="#5cb3ec" stroke="#1b5e93" />
    <circle cx="594.700" cy="595.300" r="1.900" fill="#f39ac0" stroke="#70304c" strokeWidth=".8" />
    <text x="509" y="203" transform="rotate(4 509 203)" fontSize="15" fontWeight="700" fontFamily='"Noto Sans CJK SC", sans-serif' fill="#a050f0">右视基准面</text>

    <path d="M697 162h6M700 159v6M755 401h6M758 398v6" stroke="#666" strokeWidth="1" />
    <path d="M231.500 679 232 662" stroke="#3cc44a" strokeWidth="2.200" />
    <path d="M229 664.500 232.200 658 235 664.500z" fill="#0c5a16" />
    <path d="M231 679.500 215 678.500" stroke="#0a0aa8" strokeWidth="2.400" />
    <path d="M216.500 675.500 209.500 678.200 216 681.500z" fill="#0a0aa8" />
    <circle cx="231.500" cy="681" r="2.500" fill="#c01414" />
    <path d="M230 676 233 679" stroke="#1d6a20" strokeWidth="1.500" />
    <g fontFamily='"Open Sans", sans-serif' fontSize="7">
      <text x="231" y="654" fill="#3da344">Y</text>
      <text x="204" y="678" fill="#3c3cdc">Z</text>
    </g>
    <rect x="268" y="713" width="166" height="2" fill="url(#shade)" />
  </Scene>
);

export default function App() {
  return (
    <Page>
      <GlobalStyle />
      <TitleBar>
        <MenuArea>
          <Brand>
            <BrandMark viewBox="0 0 16 16" aria-hidden="true">
              <path d="M3.500 1.500h7c-.5 2-2.500 3.500-5.500 4M4.500 5.800c3-.3 4 1.700 2.500 4.200-1.500 2.200-4 3.500-6.500 3.700l3.200-6M15.500 6.500c-3-1-4.500-.2-4.500 1.300 0 1.700 3 1.800 3 3.600 0 2-2.500 2.800-5.500 2" fill="none" stroke="#d9261c" strokeWidth="1.500" />
            </BrandMark>
            <span><b>SOLID</b>WORKS</span>
          </Brand>
          <MenuNav>
            {["文件(F)", "编辑(E)", "视图(V)", "插入(I)", "工具(T)", "窗口(W)"].map((m) => <MenuButton key={m}>{m}</MenuButton>)}
          </MenuNav>
          <Icon name="pin" size={11} />
        </MenuArea>
        <QuickBar>
          {quick.map(([n, drop]) => (
            <React.Fragment key={n}>
              <QuickItem $solo={!drop} aria-label={n}><Icon name={n} size={16} /></QuickItem>
              {drop && <DropButton $w={10} aria-label={`${n} menu`}><Caret $pale={n !== "print" && n !== "gear"} /></DropButton>}
            </React.Fragment>
          ))}
        </QuickBar>
        <DocTitle>零件15 *</DocTitle>
        <SearchBox>
          <Icon name="command" size={10} />
          <SearchInput aria-label="搜索命令" placeholder="搜索命令" />
        </SearchBox>
      </TitleBar>

      <Ribbon>
        <Group $w={131}>
          <Big icon="extrude" lines={["拉伸", "凸台/", "基体"]} w={25} />
          <Big icon="revolve" lines={["旋转", "凸台/", "基体"]} w={25} />
          <Column items={[["sweep", "扫描"], ["loft", "放样凸台/基体"], ["boundary", "边界凸台/基体"]]} />
        </Group>
        <Group $w={131}>
          <Big icon="cutBox" lines={["拉伸", "切除"]} w={20} />
          <Big icon="hole" lines={["异型孔", "向导"]} w={28} drop />
          <Big icon="revCut" lines={["旋转", "切除"]} w={24} />
          <Column items={[["sweepCut", "扫描切除"], ["loftCut", "放样切除"], ["boundary", "边界切除"]]} />
        </Group>
        <Group $w={126}>
          <Big icon="fillet" lines={["圆角"]} w={20} drop />
          <Big icon="pattern" lines={["线性", "阵列"]} w={20} drop />
          <Column items={[["rib", "筋"], ["draft", "拔模"], ["shell", "抽壳"]]} />
          <Column items={[["wrap", "包覆"], ["intersect", "相交"], ["mirror", "镜向"]]} />
        </Group>
        <Group $w={44}>
          <Big icon="refGeo" lines={["参考", "几..."]} w={20} drop />
          <Big icon="curve" lines={["曲线"]} w={21} drop />
        </Group>
        <InstantTool><Icon name="instant" size={17} />Instant3D</InstantTool>
      </Ribbon>

      <TabRow>
        <TabList>
          {["特征", "草图", "曲面", "钣金", "焊件", "标注", "评估"].map((t, i) => <CommandTab key={t} $on={i === 0}>{t}</CommandTab>)}
          {["MBD Dimensions", "SOLIDWORKS 插件", "SOLIDWORKS Inspection"].map((t) => <WideTab key={t}>{t}</WideTab>)}
        </TabList>
        <HeadsUp>
          {views.map(([n, drop]) => (
            <React.Fragment key={n}>
              <ViewButton aria-label={n}><Icon name={n} size={16} /></ViewButton>
              {drop && <DropButton $w={8} aria-label={`${n} menu`}><Caret $pale /></DropButton>}
            </React.Fragment>
          ))}
        </HeadsUp>
        <WindowButtons>
          {["paneL", "paneR", "min", "restore", "close"].map((n) => <ViewButton key={n} aria-label={n}><Icon name={n} size={14} /></ViewButton>)}
        </WindowButtons>
      </TabRow>

      <Body>
        <Panel>
          <Grip />
          <PanelTabs>
            {["part", "property", "config", "target", "ball", "cam"].map((n) => <PanelTab key={n} $on={n === "property"} aria-label={n}><Icon name={n} /></PanelTab>)}
          </PanelTabs>
          <FeatureHead>
            <Icon name="plane" size={14} />
            <FeatureName>基准面4</FeatureName>
            <button aria-label="help"><Icon name="help" size={12} /></button>
          </FeatureHead>
          <ConfirmRow>
            <button aria-label="OK"><Icon name="check" size={13} /></button>
            <button aria-label="Cancel"><Icon name="cancel" size={12} /></button>
          </ConfirmRow>
          <Section $end={4}>
            <Heading>信息</Heading>
            <Message>完全定义</Message>
          </Section>
          <Section $end={4}>
            <Heading>第一参考</Heading>
            <Pick label="第一参考" value="点9@草图5" color="#55a5ff" active />
            <Relation icon="coincident" label="重合" on />
            <Relation icon="project" label="投影" />
            <NumberField icon="parallelPlane" label="第一参考 0" />
          </Section>
          <Section $end={4}>
            <Heading>第二参考</Heading>
            <Pick label="第二参考" value="点31@草图5" color="#ff80c0" />
            <Relation icon="coincident" label="重合" on />
            <Relation icon="project" label="投影" />
            <NumberField icon="parallelPlane" label="第二参考 0" />
          </Section>
          <Section $end={5}>
            <Heading>第三参考</Heading>
            <Pick label="第三参考" value="右视基准面" color="#8000ff" />
            <Relation icon="parallel" label="平行" />
            <Relation icon="perpendicular" label="垂直" on />
            <Relation icon="coincident" label="重合" />
            <NumberField icon="angle" label="角度" />
            <NumberField icon="distance" label="距离" />
            <Relation icon="symmetric" label="两侧对称" />
          </Section>
          <Section $end={0}>
            <Heading>选项</Heading>
            <OptionRow><CheckBox type="checkbox" />反转法线</OptionRow>
          </Section>
        </Panel>

        <Viewport>
          <Model />
          <TreeRoot>
            <TreeArrow />
            <Icon name="part" />
            零件15 (默认...
          </TreeRoot>
          <PullTab aria-label="collapse" />
          <CornerButton $r={52} $t={6} aria-label="OK"><Icon name="check" size={22} /></CornerButton>
          <CornerButton $r={20} $t={28} aria-label="Cancel"><Icon name="cross" size={22} /></CornerButton>
          <TaskPane>
            {["tHome", "tLib", "tFolder", "tPalette", "ball", "property", "tForum"].map((n) => <TaskButton key={n} $on={n === "ball"} aria-label={n}><Icon name={n} /></TaskButton>)}
          </TaskPane>
        </Viewport>
      </Body>
    </Page>
  );
}
